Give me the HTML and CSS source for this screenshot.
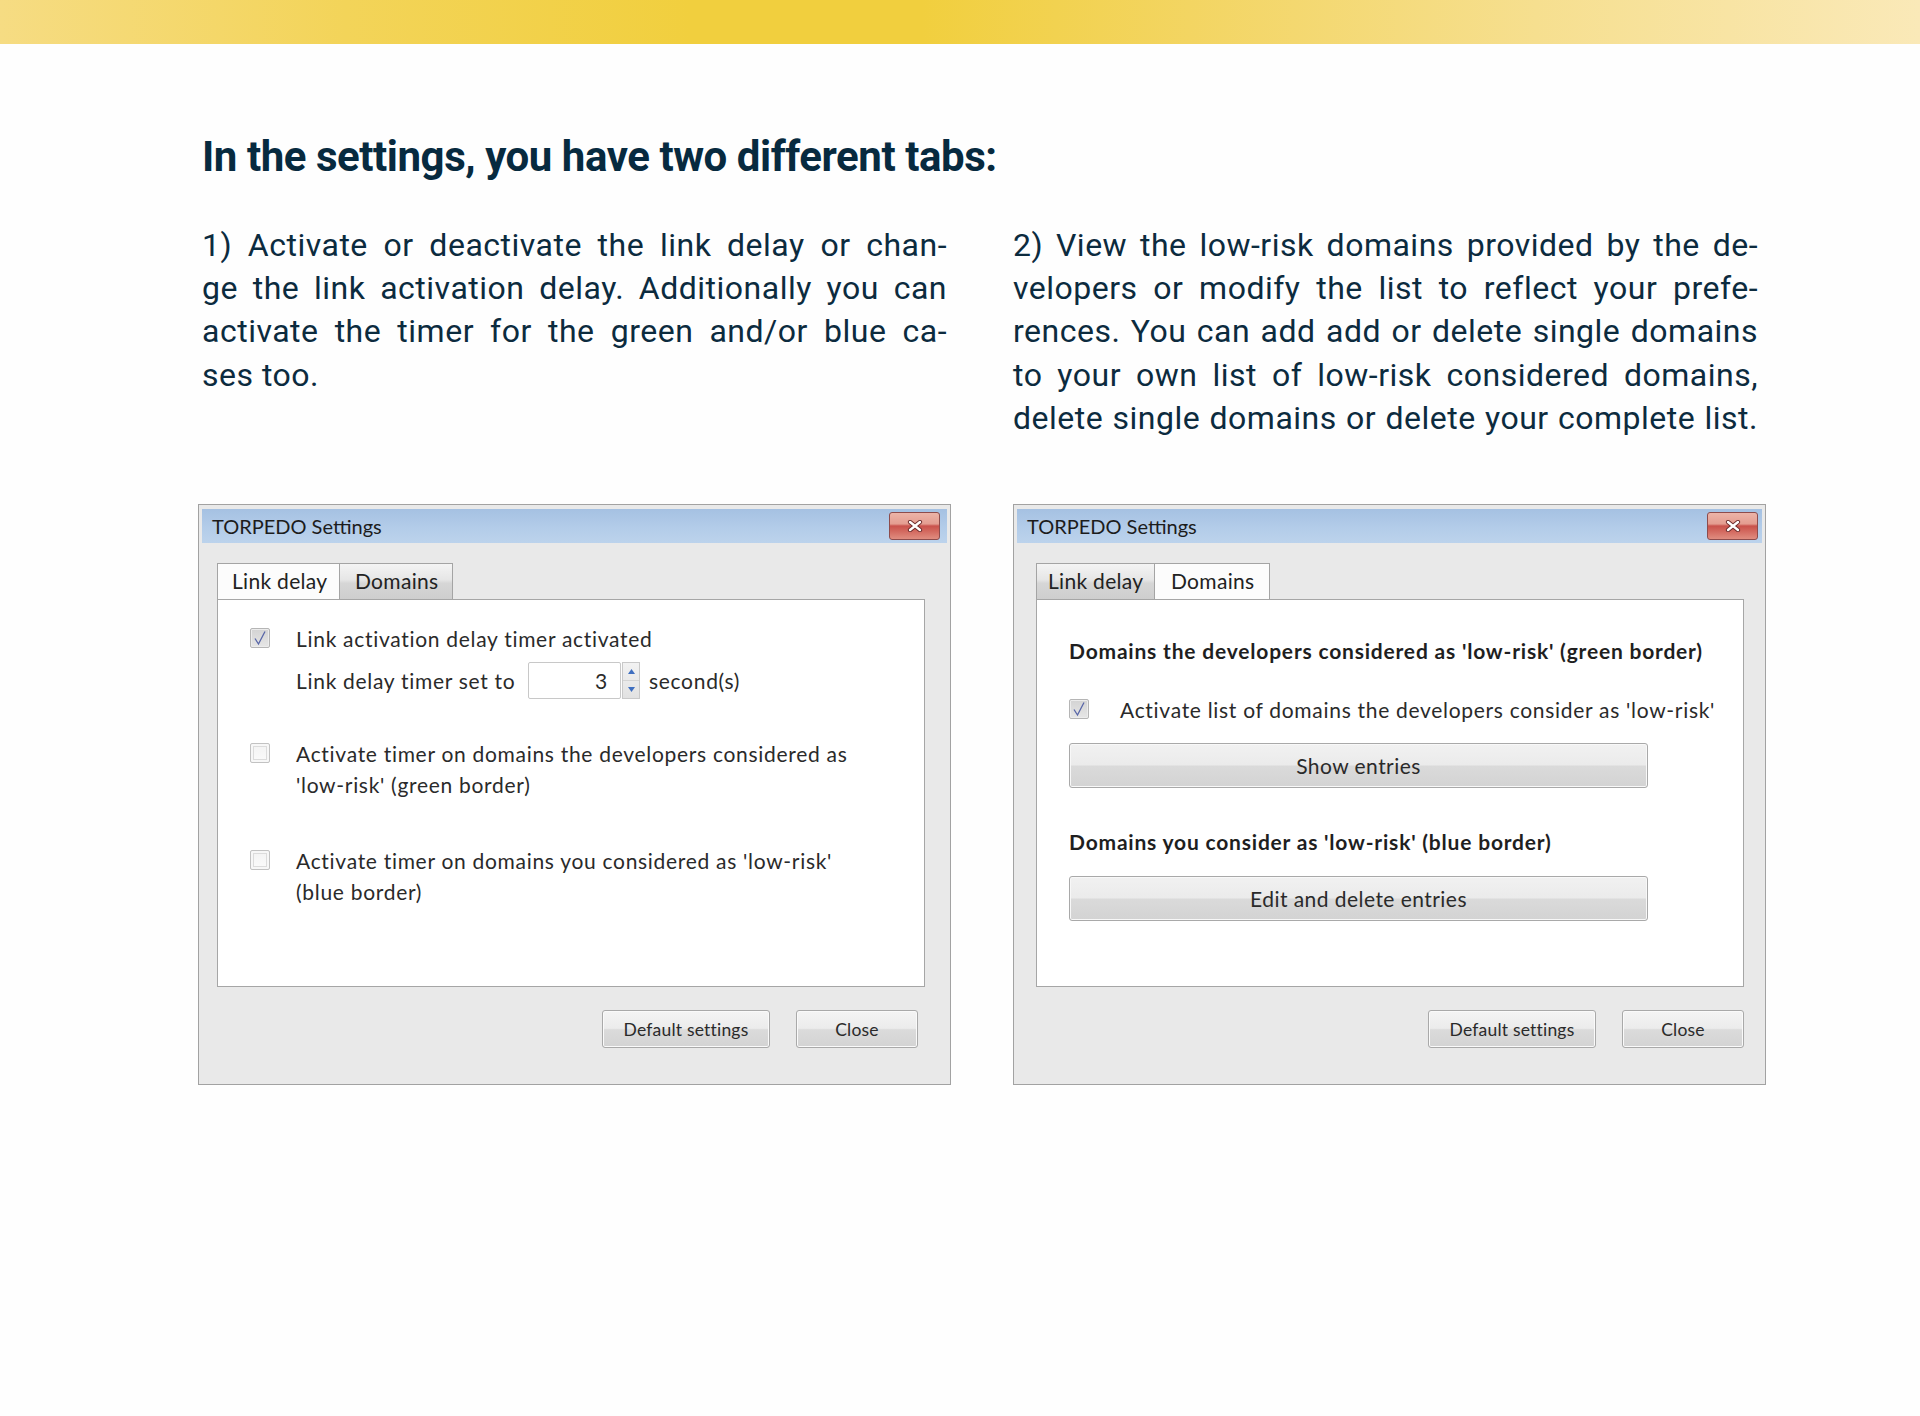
FILE: index.html
```html
<!DOCTYPE html>
<html lang="en">
<head>
<meta charset="utf-8">
<title>TORPEDO settings</title>
<link rel="stylesheet" href="styles.css">
</head>
<body>
<div class="topbar"></div>
<main class="page">
  <h1 class="title">In the settings, you have two different tabs:</h1>
  <div class="cols">
    <p class="para">
      <span class="ln">1) Activate or deactivate the link delay or chan-</span>
      <span class="ln">ge the link activation delay. Additionally you can</span>
      <span class="ln">activate the timer for the green and/or blue ca-</span>
      <span class="ln last">ses too.</span>
    </p>
    <p class="para">
      <span class="ln">2) View the low-risk domains provided by the de-</span>
      <span class="ln">velopers or modify the list to reflect your prefe-</span>
      <span class="ln">rences. You can add add or delete single domains</span>
      <span class="ln">to your own list of low-risk considered domains,</span>
      <span class="ln">delete single domains or delete your complete list.</span>
    </p>
  </div>

  <div class="dialogs">
    <section class="dialog dialog--one">
      <div class="titlebar">
        <span class="titletext">TORPEDO Settings</span>
        <span class="closebtn"><svg width="16" height="12" viewBox="0 0 16 12"><path d="M3 2 L13 10 M13 2 L3 10" stroke="#6b2a2a" stroke-width="4.2" stroke-linecap="round"/><path d="M3 2 L13 10 M13 2 L3 10" stroke="#ffffff" stroke-width="2.4" stroke-linecap="round"/></svg></span>
      </div>
      <div class="content">
        <div class="tabs">
          <span class="tab tab--active tab--w1">Link delay</span>
          <span class="tab tab--w2">Domains</span>
        </div>
        <div class="panel panel--delay">
          <div class="opt">
            <span class="cb cb--on"><svg width="14" height="16" viewBox="0 0 14 16"><path d="M2 8.5 L5.5 14 L12 1.5" fill="none" stroke="#5866a8" stroke-width="1.3"/></svg></span>
            <span class="lbl">Link activation delay timer activated</span>
          </div>
          <div class="timer-row">
            <span class="timer-lbl">Link delay timer set to</span>
            <span class="num">3</span>
            <span class="spin">
              <span class="spin-half"><svg width="7" height="5" viewBox="0 0 7 5"><path d="M0 5 L3.5 0 L7 5 Z" fill="#3f6fc0"/></svg></span>
              <span class="spin-half"><svg width="7" height="5" viewBox="0 0 7 5"><path d="M0 0 L3.5 5 L7 0 Z" fill="#3f6fc0"/></svg></span>
            </span>
            <span class="unit">second(s)</span>
          </div>
          <div class="opt opt--green">
            <span class="cb"></span>
            <span class="lbl">Activate timer on domains the developers considered as<br>'low-risk' (green border)</span>
          </div>
          <div class="opt opt--blue">
            <span class="cb"></span>
            <span class="lbl">Activate timer on domains you considered as 'low-risk'<br>(blue border)</span>
          </div>
        </div>
        <div class="actions actions--one">
          <span class="btn btn--default">Default settings</span>
          <span class="btn btn--close">Close</span>
        </div>
      </div>
    </section>

    <section class="dialog dialog--two">
      <div class="titlebar">
        <span class="titletext">TORPEDO Settings</span>
        <span class="closebtn"><svg width="16" height="12" viewBox="0 0 16 12"><path d="M3 2 L13 10 M13 2 L3 10" stroke="#6b2a2a" stroke-width="4.2" stroke-linecap="round"/><path d="M3 2 L13 10 M13 2 L3 10" stroke="#ffffff" stroke-width="2.4" stroke-linecap="round"/></svg></span>
      </div>
      <div class="content">
        <div class="tabs">
          <span class="tab tab--w3">Link delay</span>
          <span class="tab tab--active tab--w4">Domains</span>
        </div>
        <div class="panel panel--domains">
          <div class="sect">Domains the developers considered as 'low-risk' (green border)</div>
          <div class="opt opt--dev">
            <span class="cb cb--on"><svg width="14" height="16" viewBox="0 0 14 16"><path d="M2 8.5 L5.5 14 L12 1.5" fill="none" stroke="#5866a8" stroke-width="1.3"/></svg></span>
            <span class="lbl">Activate list of domains the developers consider as 'low-risk'</span>
          </div>
          <div class="wide-btn wide-btn--show">Show entries</div>
          <div class="sect sect--own">Domains you consider as 'low-risk' (blue border)</div>
          <div class="wide-btn wide-btn--edit">Edit and delete entries</div>
        </div>
        <div class="actions actions--two">
          <span class="btn btn--default">Default settings</span>
          <span class="btn btn--close">Close</span>
        </div>
      </div>
    </section>
  </div>
</main>
</body>
</html>
```

FILE: styles.css
```css
html, body {
  margin: 0;
  padding: 0;
  background: #fefefe;
}

body {
  font-family: Roboto, "Liberation Sans", sans-serif;
  color: #0b2a3d;
}

.topbar {
  height: 44px;
  background: linear-gradient(90deg, #f6dc83 0%, #f3d459 18%, #f1cf3e 36%, #f1cf3e 48%, #f3d562 62%, #f6df8f 80%, #fae9b8 100%);
}

.page {
  padding-left: 198px;
}

.title {
  margin: 88px 0 0 4px;
  font-family: Roboto, "Liberation Sans", sans-serif;
  font-weight: 700;
  font-size: 42px;
  line-height: 50px;
  letter-spacing: -0.45px;
  color: #072a3f;
}

.cols {
  display: grid;
  grid-template-columns: 745px 745px;
  column-gap: 66px;
  margin: 42px 0 0 4px;
}

.para {
  margin: 0;
  font-size: 32px;
  line-height: 43.2px;
  letter-spacing: 0.5px;
  color: #0c2b3e;
}

.ln {
  display: block;
  text-align: justify;
  text-align-last: justify;
}

.ln.last {
  text-align-last: left;
}

/* ---------- dialogs ---------- */

.dialogs {
  display: grid;
  grid-template-columns: 753px 753px;
  column-gap: 62px;
  margin-top: 64px;
}

.dialog {
  box-sizing: border-box;
  height: 581px;
  border: 1px solid #a2a2a2;
  background: #e9e9e9;
  padding: 4px 3px 0;
  font-family: Lato, "Open Sans", sans-serif;
  color: #262626;
}

.titlebar {
  height: 34px;
  display: flex;
  align-items: center;
  justify-content: space-between;
  padding: 0 7px 0 10px;
  background: linear-gradient(180deg, #a5c1e2 0%, #b3cce9 55%, #bcd3ec 100%);
}

.dialog--two .titlebar {
  padding-right: 4px;
}

.titletext {
  font-size: 20px;
  color: #1c1c1c;
}

.closebtn {
  box-sizing: border-box;
  width: 51px;
  height: 28px;
  border: 1px solid #8d4c4c;
  border-radius: 3px;
  background: linear-gradient(180deg, #ecb4a8 0%, #e49d90 42%, #c9514b 50%, #cf5f56 62%, #e08d80 100%);
  display: flex;
  align-items: center;
  justify-content: center;
}

.content {
  width: 708px;
  margin: 20px 0 0 15px;
}

.dialog--two .content {
  margin-left: 19px;
}

.tabs {
  display: flex;
  height: 36px;
}

.tab {
  box-sizing: border-box;
  height: 36px;
  padding-left: 14px;
  border: 1px solid #a4a4a4;
  border-bottom: none;
  font-size: 21px;
  letter-spacing: 0.3px;
  line-height: 34px;
  color: #222;
  background: linear-gradient(180deg, #f4f4f4 0%, #e6e6e6 45%, #d6d6d6 55%, #cecece 100%);
}

.tab + .tab {
  border-left: none;
}

.tab--active {
  background: #fcfcfc;
}

.tab--w1 { width: 123px; }
.tab--w2 { width: 113px; padding-left: 15px; }
.tab--w3 { width: 119px; padding-left: 11px; }
.tab--w4 { width: 115px; padding-left: 16px; }

.panel {
  box-sizing: border-box;
  height: 388px;
  background: #ffffff;
  border: 1px solid #a6a6a6;
  padding-left: 32px;
}

.panel--delay {
  padding-top: 23px;
}

.panel--domains {
  padding-top: 35px;
}

.opt {
  display: flex;
  align-items: flex-start;
}

.lbl {
  font-size: 21px;
  letter-spacing: 0.7px;
  line-height: 31px;
  color: #2a2a2a;
  white-space: nowrap;
}

.cb {
  flex: none;
  box-sizing: border-box;
  width: 20px;
  height: 20px;
  margin-top: 5px;
  margin-right: 26px;
  border: 1px solid #c2c2c2;
  border-radius: 2px;
  background: linear-gradient(180deg, #f3f3f3, #fbfbfb);
  box-shadow: inset 0 0 0 2px #f7f7f7, inset 0 0 0 3px #dcdcdc;
}

.cb--on {
  border-color: #b5b5b5;
  background: linear-gradient(180deg, #d3d3d3, #e6e6e6);
  box-shadow: inset 0 0 0 1px #ececec;
  display: flex;
  align-items: center;
  justify-content: center;
}

.timer-row {
  display: flex;
  align-items: center;
  height: 37px;
  margin: 8px 0 0 46px;
  font-size: 21px;
  letter-spacing: 0.7px;
  color: #2a2a2a;
}

.timer-lbl {
  width: 232px;
  white-space: nowrap;
}

.num {
  box-sizing: border-box;
  width: 93px;
  height: 37px;
  border: 1px solid #c8c8c8;
  border-radius: 2px;
  text-align: right;
  padding-right: 12px;
  line-height: 35px;
  background: #fff;
}

.spin {
  box-sizing: border-box;
  width: 18px;
  height: 37px;
  margin-left: 1px;
  display: flex;
  flex-direction: column;
  border: 1px solid #c9c9c9;
  background: linear-gradient(180deg, #f2f2f2, #e2e2e2);
}

.spin-half {
  flex: 1;
  display: flex;
  align-items: center;
  justify-content: center;
}

.spin-half + .spin-half {
  border-top: 1px solid #d4d4d4;
}

.unit {
  margin-left: 9px;
}

.opt--green {
  margin-top: 39px;
}

.opt--blue {
  margin-top: 45px;
}

.sect {
  font-weight: 700;
  font-size: 21px;
  letter-spacing: 0.8px;
  line-height: 31px;
  color: #1f1f1f;
  white-space: nowrap;
}

.opt--dev {
  margin-top: 28px;
}

.opt--dev .cb {
  margin-right: 31px;
}

.wide-btn {
  box-sizing: border-box;
  width: 579px;
  height: 45px;
  border: 1px solid #a9a9a9;
  border-radius: 3px;
  background: linear-gradient(180deg, #f1f1f1 0%, #ebebeb 48%, #dadada 52%, #d3d3d3 100%);
  box-shadow: inset 0 0 0 1px #f8f8f8;
  display: flex;
  align-items: center;
  justify-content: center;
  font-size: 21px;
  letter-spacing: 0.45px;
  color: #2a2a2a;
}

.wide-btn--show {
  margin-top: 18px;
}

.sect--own {
  margin-top: 38px;
}

.wide-btn--edit {
  margin-top: 19px;
}

.actions {
  display: flex;
  justify-content: flex-end;
  gap: 26px;
  margin-top: 23px;
}

.actions--one {
  padding-right: 7px;
}

.btn {
  box-sizing: border-box;
  height: 38px;
  border: 1px solid #a9a9a9;
  border-radius: 3px;
  background: linear-gradient(180deg, #f4f4f4 0%, #ececec 48%, #dbdbdb 52%, #d3d3d3 100%);
  box-shadow: inset 0 0 0 1px #fafafa;
  display: flex;
  align-items: center;
  justify-content: center;
  font-size: 17.5px;
  letter-spacing: 0.2px;
  color: #2a2a2a;
}

.btn--default {
  width: 168px;
}

.btn--close {
  width: 122px;
}
```
